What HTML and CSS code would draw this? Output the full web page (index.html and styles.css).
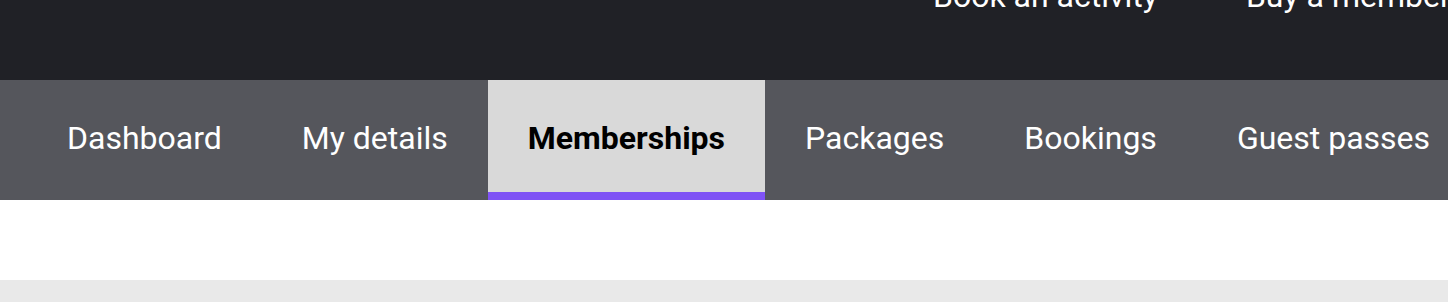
FILE: index.html
```html
<!DOCTYPE html>
<html lang="en">
<head>
    <meta charset="UTF-8">
    <meta name="viewport" content="width=device-width, initial-scale=1.0">
    <title>Memberships - Account</title>
    <link rel="stylesheet" href="styles.css">
</head>
<body>

<!-- Top header with main links -->
<header class="top-bar">
    <nav class="top-links">
        <a href="#">Book an activity</a>
        <a href="#">Buy a membership</a>
    </nav>
</header>

<!-- Account tabs -->
<nav class="account-tabs">
    <a class="tab" href="#">Dashboard</a>
    <a class="tab" href="#">My details</a>
    <a class="tab active" href="#">Memberships</a>
    <a class="tab" href="#">Packages</a>
    <a class="tab" href="#">Bookings</a>
    <a class="tab" href="#">Guest passes</a>
</nav>

<div class="spacer"></div>
<div class="content"></div>

</body>
</html>
```

FILE: styles.css
```css
body {
    font-family: 'Roboto', 'Liberation Sans', sans-serif;
    margin: 0;
    padding: 0;
    background-color: #e9e9e9;
    overflow: hidden;
}

a {
    text-decoration: none;
}

.top-bar {
    background-color: #202126;
    height: 80px;
    overflow: hidden;
}

.top-links {
    display: flex;
    gap: 88px;
    padding-left: 933px;
    margin-top: -28px;
    white-space: nowrap;
}

.top-links a {
    color: #fff;
    font-size: 32px;
    line-height: 48px;
}

.account-tabs {
    display: flex;
    height: 120px;
    padding-left: 27px;
    background-color: #55565c;
    white-space: nowrap;
}

.tab {
    display: flex;
    align-items: center;
    padding: 3px 40px 0;
    border-bottom: 8px solid transparent;
    color: #fff;
    font-size: 32px;
    flex-shrink: 0;
}

.tab.active {
    background-color: #d9d9d9;
    border-bottom-color: #7f52f5;
    color: #000;
    font-weight: bold;
}

.spacer {
    height: 80px;
    background-color: #fff;
}

.content {
    height: 22px;
    background-color: #e9e9e9;
}
```
